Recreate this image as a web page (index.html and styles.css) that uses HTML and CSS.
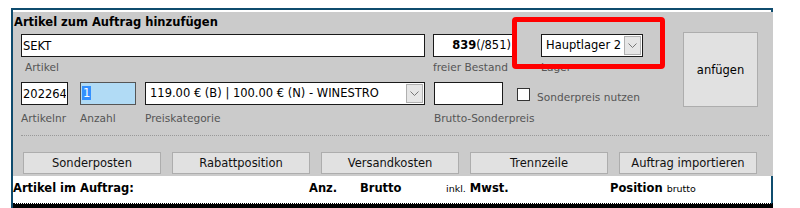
FILE: index.html
```html
<!DOCTYPE html>
<html lang="de">
<head>
  <meta charset="UTF-8">
  <title>Auftrag bearbeiten</title>
  <link rel="stylesheet" href="styles.css">
</head>
<body>

<div class="frame">
  <!-- Artikel hinzufuegen -->
  <div class="panel">
    <h3 class="panel-title">Artikel zum Auftrag hinzufügen</h3>

    <div class="add-area">
      <div class="fields">
        <div class="row">
          <div class="field f-artikel">
            <input class="box" type="text" value="SEKT">
            <label class="lbl lbl-indent">Artikel</label>
          </div>
          <div class="field f-bestand">
            <div class="box box-right"><b>839</b>(/851)</div>
            <label class="lbl">freier Bestand</label>
          </div>
          <div class="field f-lager">
            <div class="box select">
              <span class="select-text">Hauptlager 2 (</span>
              <span class="select-arrow"><svg width="9" height="6" viewBox="0 0 9 6"><path d="M0.5 0.5 L4.5 4.5 L8.5 0.5" fill="none" stroke="#777" stroke-width="1"/></svg></span>
            </div>
            <label class="lbl">Lager</label>
          </div>
        </div>

        <div class="row row-2">
          <div class="field f-nr">
            <input class="box" type="text" value="202264">
            <label class="lbl lbl-low">Artikelnr</label>
          </div>
          <div class="field f-anzahl">
            <div class="box box-selected"><span class="sel">1</span></div>
            <label class="lbl lbl-low">Anzahl</label>
          </div>
          <div class="field f-preis">
            <div class="box select">
              <span class="select-text">119.00 € (B) | 100.00 € (N) - WINESTRO</span>
              <span class="select-arrow"><svg width="9" height="6" viewBox="0 0 9 6"><path d="M0.5 0.5 L4.5 4.5 L8.5 0.5" fill="none" stroke="#777" stroke-width="1"/></svg></span>
            </div>
            <label class="lbl lbl-low">Preiskategorie</label>
          </div>
          <div class="field f-sonder">
            <input class="box" type="text" value="">
            <label class="lbl lbl-low">Brutto-Sonderpreis</label>
          </div>
          <div class="check">
            <span class="check-box"></span>
            <span class="check-label">Sonderpreis nutzen</span>
          </div>
        </div>
      </div>

      <button class="add-btn">anfügen</button>
    </div>

    <div class="separator"></div>

    <div class="actions">
      <button class="btn">Sonderposten</button>
      <button class="btn">Rabattposition</button>
      <button class="btn">Versandkosten</button>
      <button class="btn">Trennzeile</button>
      <button class="btn">Auftrag importieren</button>
    </div>

    <!-- Markierung -->
    <div class="highlight"></div>
  </div>

  <!-- Artikel im Auftrag -->
  <div class="order-head">
    <span>Artikel im Auftrag:</span>
    <span>Anz.</span>
    <span>Brutto</span>
    <span><small>inkl.</small> Mwst.</span>
    <span>Position <small>brutto</small></span>
  </div>
  <div class="order-bar"></div>
</div>

</body>
</html>
```

FILE: styles.css
```css
body {
  margin: 0;
  background-color: #fff;
  font-family: "DejaVu Sans", Verdana, sans-serif;
  font-size: 11.5px;
  color: #000;
}
.frame {
  margin: 8px 0 0 11px;
  width: 762px;
  height: 200px;
  padding-top: 2px;
  border-top: 2px solid #0f4c6e;
  border-left: 2px solid #0f4c6e;
  border-right: 2px solid #0f4c6e;
  box-sizing: border-box;
}
.panel {
  position: relative;
  width: 760px;
  background-color: #cbcbcb;
  padding: 1px 0 2px 0;
}
.panel-title {
  margin: 0;
  padding-left: 1px;
  font-size: 11.5px;
  line-height: 18px;
  font-weight: bold;
}
.add-area {
  display: flex;
  margin-top: 3px;
  padding-left: 8px;
}
.fields {
  display: flex;
  flex-direction: column;
}
.row {
  display: flex;
}
.row-2 {
  margin-top: 8px;
}
.field {
  display: flex;
  flex-direction: column;
}
.box {
  height: 23px;
  box-sizing: border-box;
  border: 1px solid #1a1a1a;
  background-color: #fff;
  font-family: inherit;
  font-size: 11.5px;
  padding: 0 1px;
  margin: 0;
  line-height: 21px;
  color: #000;
  outline: none;
  overflow: hidden;
  white-space: nowrap;
}
.box-right {
  text-align: right;
  padding-right: 3px;
}
.box-selected {
  background-color: #b1dbf5;
  border-color: #555;
}
.sel {
  background-color: #3390ff;
  color: #fff;
  padding: 0 1px;
}
.select {
  display: flex;
  align-items: stretch;
  padding: 0 0 0 4px;
}
.select-text {
  flex: 1;
  overflow: hidden;
}
.select-arrow {
  width: 15px;
  margin: 1px;
  border: 1px solid #b0b0b0;
  background-color: #e6e6e6;
  display: flex;
  align-items: center;
  justify-content: center;
}
.lbl {
  font-size: 10.6px;
  line-height: 14px;
  color: #555;
  margin-top: 3px;
  white-space: nowrap;
}
.lbl-low {
  margin-top: 6px;
}
.lbl-indent {
  padding-left: 4px;
}
.f-artikel { width: 404px; }
.f-bestand { width: 82px; margin-left: 8px; }
.f-lager { width: 102px; margin-left: 26px; }
.f-nr { width: 47px; }
.f-anzahl { width: 56px; margin-left: 12px; }
.f-preis { width: 280px; margin-left: 9px; }
.f-sonder { width: 69px; margin-left: 9px; }
.check {
  display: flex;
  align-items: flex-start;
  margin-left: 14px;
  padding-top: 6px;
}
.check-box {
  width: 13px;
  height: 13px;
  box-sizing: border-box;
  border: 1px solid #333;
  background-color: #fff;
}
.check-label {
  margin-left: 7px;
  margin-top: 3px;
  font-size: 10.6px;
  line-height: 13px;
  color: #555;
}
.add-btn {
  margin: -2px 15px 0 auto;
  width: 75px;
  height: 75px;
  background-color: #e1e1e1;
  border: 1px solid #adadad;
  font-family: inherit;
  font-size: 11.5px;
  color: #000;
  padding: 0;
}
.separator {
  margin: 10px 4px 0 8px;
  border-top: 1px dotted #999;
}
.actions {
  display: flex;
  gap: 11px;
  margin-top: 16px;
  padding-left: 10px;
}
.btn {
  width: 138px;
  height: 22px;
  padding: 0;
  background-color: #e1e1e1;
  border: 1px solid #adadad;
  font-family: inherit;
  font-size: 11.5px;
  color: #111;
}
.highlight {
  position: absolute;
  left: 499px;
  top: 5px;
  width: 153px;
  height: 52px;
  box-sizing: border-box;
  border: 5px solid #f00;
  border-radius: 4px;
}
.order-head {
  display: grid;
  grid-template-columns: 296px 51px 86px 164px 1fr;
  width: 760px;
  height: 27px;
  line-height: 25px;
  font-weight: bold;
  font-size: 11.5px;
  white-space: nowrap;
}
.order-head small {
  font-weight: normal;
  font-size: 9.5px;
}
.order-bar {
  width: 760px;
  height: 10px;
  border-top: 1px dotted #000;
  background-color: #000;
  background-clip: padding-box;
}
```
